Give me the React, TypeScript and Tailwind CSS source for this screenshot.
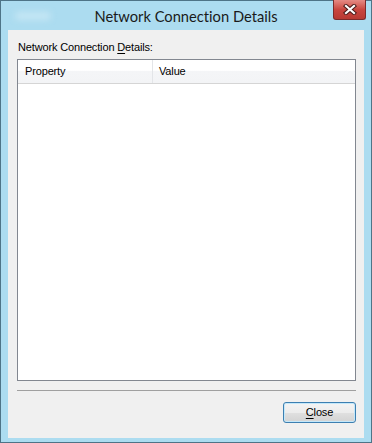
import React from "react";

export default function App() {
  const font = { fontFamily: "Lato, 'Liberation Sans', sans-serif", fontVariantLigatures: "none" as const };
  const small = { fontFamily: "'Liberation Sans', Arial, sans-serif" };
  return (
    <div className="w-[372px] h-[443px] bg-white" style={font}>
      <div className="w-[372px] h-[443px] border border-[#4e7487] bg-[#acdcf0] flex flex-col">
        {/* Title bar */}
        <div className="relative h-[29px] shrink-0 flex items-center justify-center">
          <div className="absolute left-[14px] top-[11px] w-[36px] h-[8px] rounded-full bg-[#c4e6f4] blur-[3px]" />
          <span className="text-[14.7px] text-[#1a1a1a] leading-none mt-[1px]">Network Connection Details</span>
          <div className="absolute right-[5px] top-[-1px] w-[33px] h-[20px] rounded-b-[3px] border border-[#7a2b2b] border-t-0 bg-gradient-to-b from-[#e58a84] via-[#c9463f] to-[#b83a33] flex items-center justify-center">
            <svg width="14" height="11" viewBox="0 0 14 11">
              <path d="M3 2 L11 9 M11 2 L3 9" stroke="#4a1a18" strokeWidth="4.2" strokeLinecap="square" />
              <path d="M3 2 L11 9 M11 2 L3 9" stroke="#ffffff" strokeWidth="2.2" strokeLinecap="square" />
            </svg>
          </div>
        </div>
        {/* Client area */}
        <div className="mx-[7px] mb-[4px] flex-1 bg-[#f0f0f0] flex flex-col pl-[9px] pr-[8px] text-[11px] tracking-[-0.15px]" style={small}>
          <div className="pt-[10px] pl-[1px] leading-[14px] text-[#000]">
            Network Connection <span className="underline underline-offset-2">D</span>etails:
          </div>
          <div className="mt-[5px] h-[322px] border border-[#828790] bg-white flex flex-col">
            <div className="h-[24px] flex border-b border-[#d5d5d5] bg-[linear-gradient(to_bottom,#ffffff_0%,#ffffff_45%,#f4f5f7_50%,#f3f4f6_100%)] text-[#000]">
              <div className="w-[135px] border-r border-[#e3e5e8] pl-[7px] flex items-center">Property</div>
              <div className="flex-1 pl-[6px] flex items-center">Value</div>
            </div>
          </div>
          <div className="mt-[9px] h-px bg-[#a0a0a0]" />
          <div className="flex justify-end mt-[11px]">
            <button className="w-[73px] h-[21px] rounded-[3px] border border-[#3c7fb1] bg-[linear-gradient(to_bottom,#f4f4f4_0%,#ececec_50%,#e0e0e0_51%,#d3d3d3_100%)] shadow-[inset_0_0_0_1px_#c4e8fa] text-[#000] flex items-center justify-center">
              <span><span className="underline underline-offset-2">C</span>lose</span>
            </button>
          </div>
        </div>
      </div>
    </div>
  );
}
